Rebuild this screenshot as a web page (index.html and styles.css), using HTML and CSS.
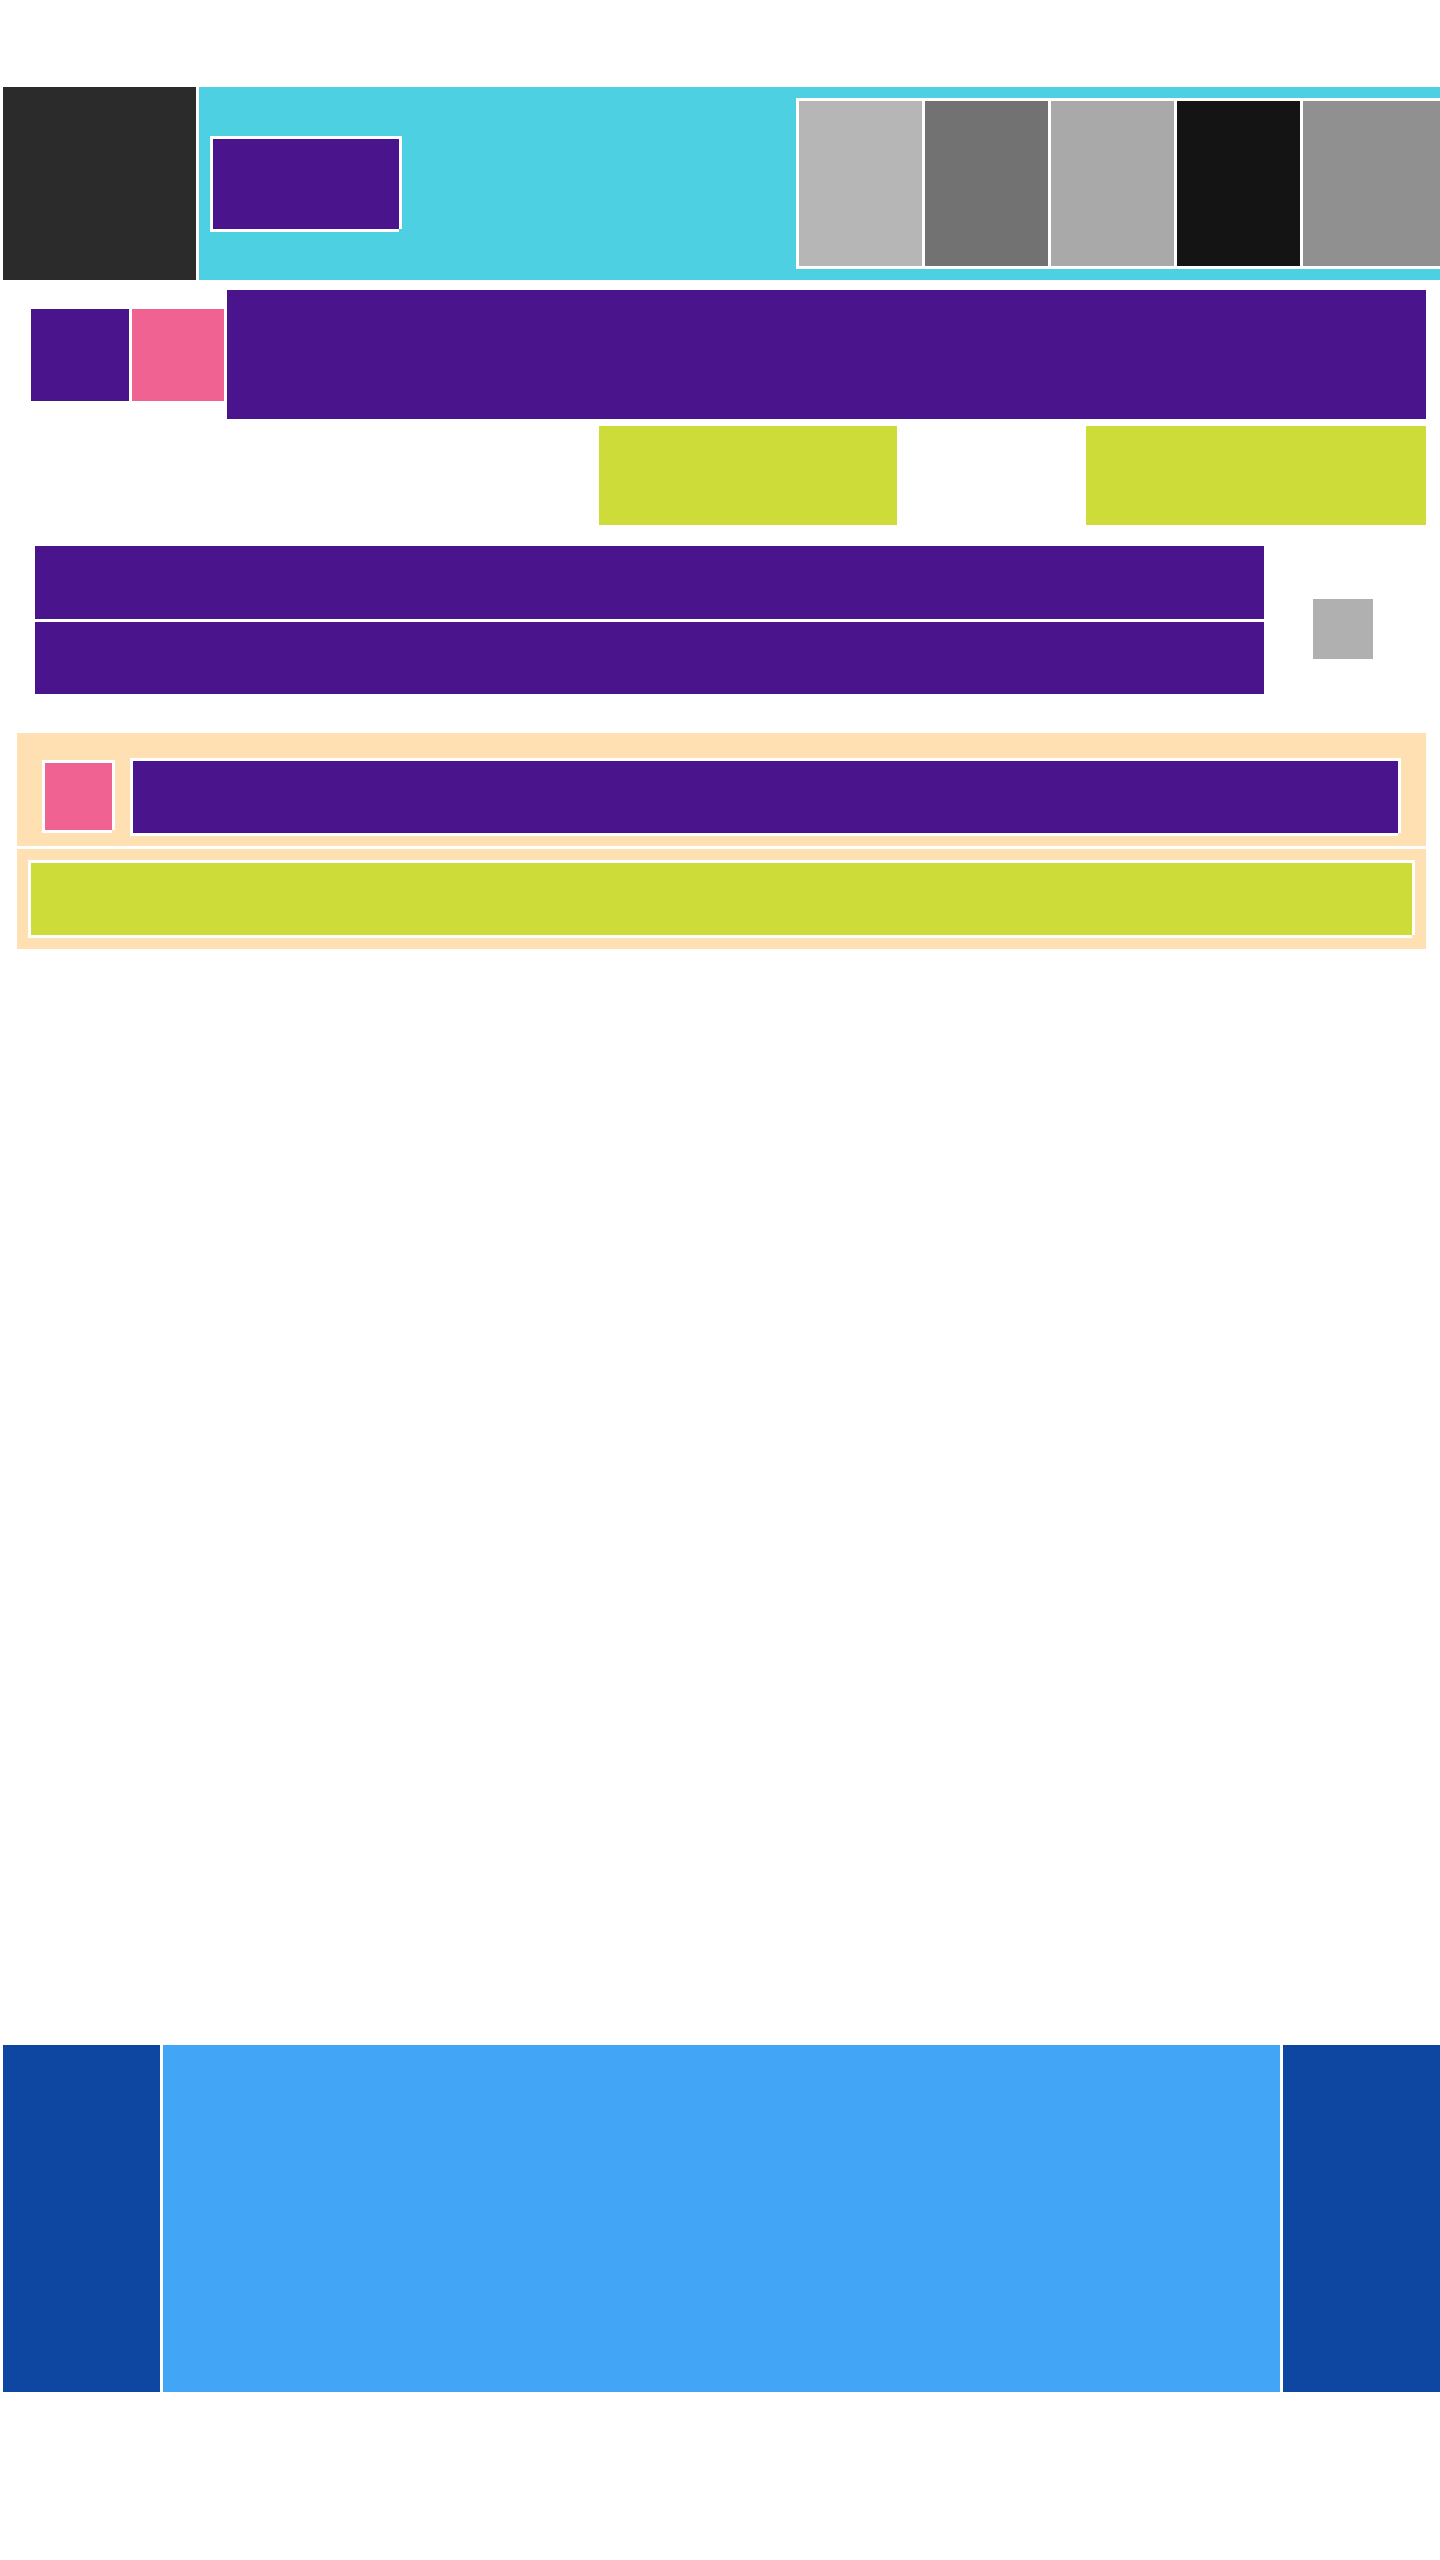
FILE: index.html
```html
<!DOCTYPE html>
<html lang="en">
<head>
<meta charset="utf-8">
<title>Layout</title>
<link rel="stylesheet" href="styles.css">
</head>
<body>
<div class="page">
  <header class="top">
    <div class="logo"></div>
    <div class="topbar">
      <div class="brand frame"></div>
      <div class="swatches">
        <div class="sw sw1"></div>
        <div class="sw sw2"></div>
        <div class="sw sw3"></div>
        <div class="sw sw4"></div>
        <div class="sw sw5"></div>
      </div>
    </div>
  </header>

  <section class="hero">
    <div class="tile tile-purple"></div>
    <div class="tile tile-pink"></div>
    <div class="hero-main"></div>
  </section>

  <section class="actions">
    <div class="act act1"></div>
    <div class="act act2"></div>
  </section>

  <section class="lines">
    <div class="line-col">
      <div class="line line1"></div>
      <div class="line line2"></div>
    </div>
    <div class="side-square"></div>
  </section>

  <section class="card card-a">
    <div class="avatar frame"></div>
    <div class="card-body frame"></div>
  </section>
  <section class="card card-b">
    <div class="card-field frame"></div>
  </section>

  <footer class="foot">
    <div class="foot-side"></div>
    <div class="foot-main"></div>
    <div class="foot-side foot-end"></div>
  </footer>
</div>
</body>
</html>
```

FILE: styles.css
```css
html, body {
  margin: 0;
  padding: 0;
  background: #ffffff;
  font-family: "Liberation Sans", Arial, sans-serif;
}

body {
  overflow-x: hidden;
}

.page {
  width: 1440px;
  min-height: 2560px;
}

.frame {
  box-shadow: -3px -3px 0 #ffffff, 3px -3px 0 #ffffff, 3px 0 0 #ffffff,
    -3px 3px 0 #ffffff, 0 3px 0 #ffffff;
}

/* header */
.top {
  margin: 87px 0 0 3px;
  height: 193px;
  display: flex;
  gap: 3px;
  overflow: hidden;
}

.logo {
  width: 193px;
  flex-shrink: 0;
  background: #2b2b2b;
}

.topbar {
  flex: 1;
  background: #4dd0e1;
  display: flex;
  align-items: center;
  padding-left: 14px;
  min-width: 0;
}

.brand {
  width: 186px;
  height: 90px;
  flex-shrink: 0;
  background: #4a148c;
}

.swatches {
  margin-left: 397px;
  flex-shrink: 0;
  display: flex;
  gap: 3px;
  border: 3px solid #ffffff;
  background: #ffffff;
  height: 165px;
}

.sw {
  width: 123px;
  height: 165px;
}

.sw1 { background: #b6b6b6; }
.sw2 { background: #727272; }
.sw3 { background: #a9a9a9; }
.sw4 { background: #141414; }
.sw5 { background: #909090; width: 160px; }

/* hero */
.hero {
  margin-top: 10px;
  padding-left: 31px;
  display: flex;
  align-items: center;
  gap: 3px;
}

.tile {
  height: 92px;
}

.tile-purple {
  width: 98px;
  background: #4a148c;
}

.tile-pink {
  width: 92px;
  background: #f06292;
}

.hero-main {
  width: 1199px;
  height: 129px;
  background: #4a148c;
}

/* action blocks */
.actions {
  margin-top: 7px;
  padding-left: 599px;
  display: flex;
  gap: 189px;
}

.act {
  height: 99px;
  background: #cddc39;
}

.act1 { width: 298px; }
.act2 { width: 340px; }

/* lines */
.lines {
  margin-top: 21px;
  padding-left: 35px;
  display: flex;
  align-items: flex-start;
}

.line-col {
  display: flex;
  flex-direction: column;
  gap: 3px;
}

.line {
  width: 1229px;
  background: #4a148c;
}

.line1 { height: 73px; }
.line2 { height: 72px; }

.side-square {
  width: 60px;
  height: 60px;
  margin: 53px 0 0 49px;
  background: #b0b0b0;
}

/* cards */
.card {
  margin-left: 17px;
  width: 1409px;
  background: #ffe0b2;
  box-sizing: border-box;
  display: flex;
  align-items: flex-start;
}

.card-a {
  margin-top: 39px;
  height: 113px;
  padding: 28px 0 0 28px;
}

.avatar {
  width: 67px;
  height: 67px;
  margin-top: 2px;
  background: #f06292;
}

.card-body {
  margin-left: 21px;
  width: 1265px;
  height: 72px;
  background: #4a148c;
}

.card-b {
  margin-top: 3px;
  height: 100px;
  padding: 14px 0 0 14px;
}

.card-field {
  width: 1381px;
  height: 72px;
  background: #cddc39;
}

/* footer */
.foot {
  margin: 1096px 0 0 3px;
  height: 347px;
  display: flex;
  gap: 3px;
}

.foot-side {
  width: 157px;
  background: #0d47a1;
}

.foot-main {
  width: 1117px;
  background: #42a5f5;
}

.foot-end {
  flex: 1;
}
```
